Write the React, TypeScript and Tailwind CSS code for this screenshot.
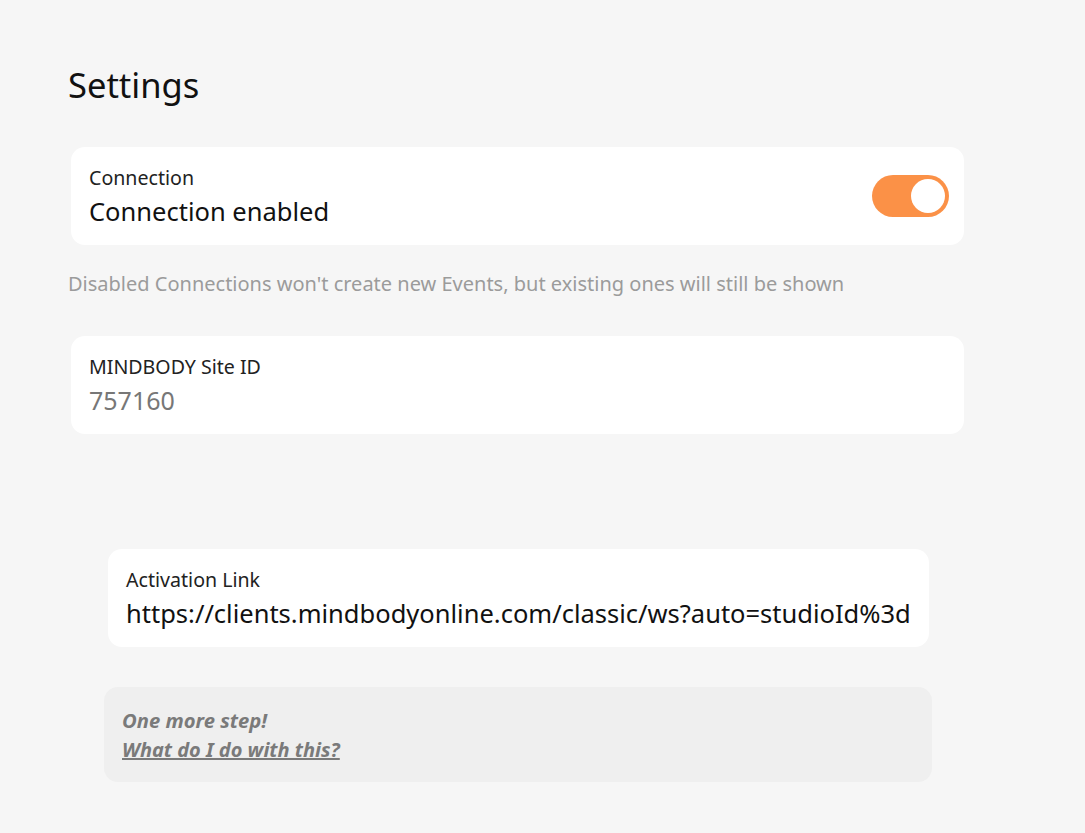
import React from "react";

export default function App() {
  return (
    <div
      className="min-h-[833px] w-full bg-[#f6f6f6] text-[#1a1a1a]"
      style={{ fontFamily: '"Noto Sans", "Open Sans", sans-serif' }}
    >
      <div className="flex flex-col pl-[68px] pt-[61px]">
        <h1 className="text-[34.5px] leading-[48px] font-normal text-[#111]">Settings</h1>

        <div className="mt-[38px] ml-[3px] flex h-[98px] w-[893px] items-center justify-between rounded-[14px] bg-white pl-[18px] pr-[15px]">
          <div className="flex flex-col">
            <span className="text-[19.6px] leading-[26px] text-[#222]">Connection</span>
            <span className="mt-[3px] text-[25.5px] leading-[34px] text-[#111]">Connection enabled</span>
          </div>
          <div className="relative h-[42px] w-[77px] rounded-full bg-[#fb9147]">
            <div className="absolute right-[4px] top-[4px] h-[34px] w-[34px] rounded-full bg-white" />
          </div>
        </div>

        <p className="mt-[25px] text-[20px] leading-[28px] text-[#9b9b9b]">
          Disabled Connections won't create new Events, but existing ones will still be shown
        </p>

        <div className="mt-[38px] ml-[3px] flex h-[98px] w-[893px] flex-col justify-center rounded-[14px] bg-white pl-[18px]">
          <span className="text-[19.6px] leading-[26px] text-[#222]">MINDBODY Site ID</span>
          <span className="mt-[3px] text-[25px] leading-[34px] text-[#777]">757160</span>
        </div>

        <div className="mt-[115px] ml-[40px] flex h-[98px] w-[821px] flex-col justify-center overflow-hidden rounded-[14px] bg-white pl-[18px] pr-[18px]">
          <span className="text-[19.6px] leading-[26px] text-[#222]">Activation Link</span>
          <span className="mt-[3px] overflow-hidden whitespace-nowrap text-[25.5px] leading-[34px] text-[#111]">
            https://clients.mindbodyonline.com/classic/ws?auto=studioId%3d757160
          </span>
        </div>

        <div className="mt-[40px] ml-[36px] flex h-[95px] w-[828px] flex-col justify-center rounded-[14px] bg-[#efefef] pl-[18px]">
          <span className="text-[20.2px] font-bold italic leading-[29px] text-[#7a7a7a]">One more step!</span>
          <a href="#" className="w-fit text-[20px] font-bold italic leading-[29px] text-[#7a7a7a] underline">
            What do I do with this?
          </a>
        </div>
      </div>
    </div>
  );
}
